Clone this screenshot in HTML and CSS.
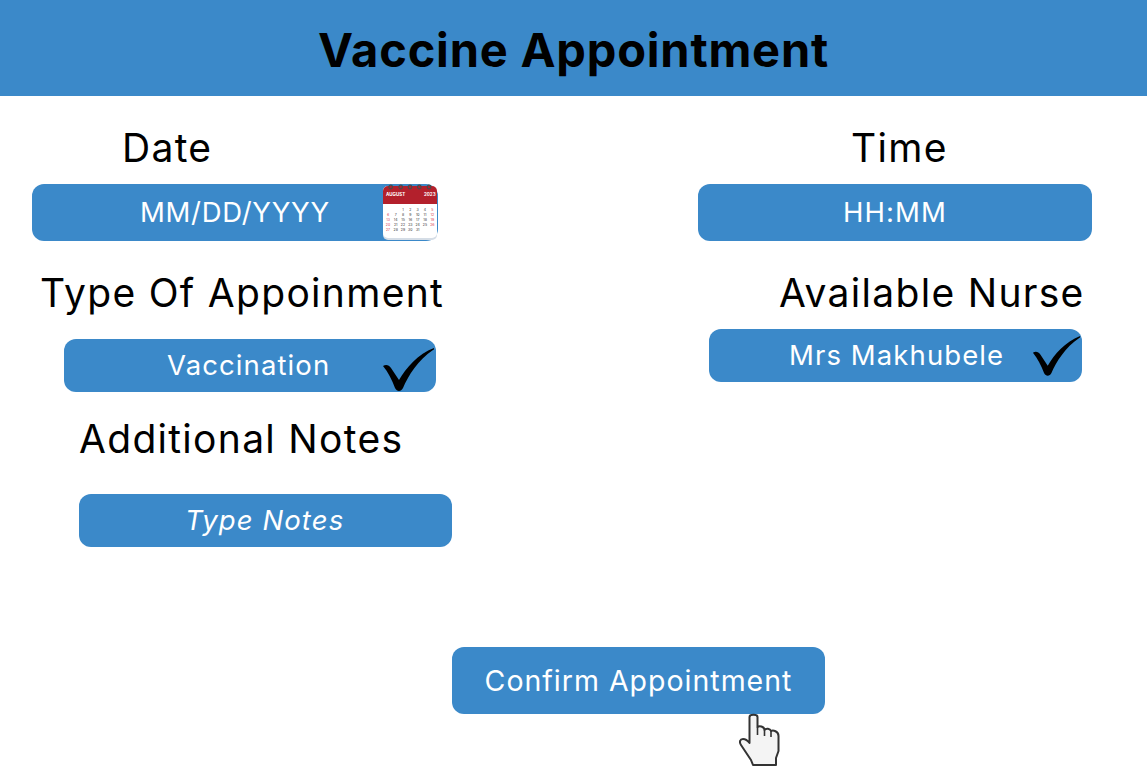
FILE: index.html
```html
<!DOCTYPE html>
<html lang="en">
<head>
  <meta charset="utf-8">
  <title>Vaccine Appointment</title>
  <link rel="stylesheet" href="styles.css">
</head>
<body>
  <header class="top-bar">
    <h1 class="title">Vaccine Appointment</h1>
  </header>

  <main class="form-area">
    <section class="left-col">
      <div class="label label-date">Date</div>
      <div class="field field-date">
        <span class="field-text date-text">MM/DD/YYYY</span>
        <svg class="calendar" viewBox="0 0 56 56" width="56" height="56">
          <rect x="1" y="2" width="54" height="54" rx="5" fill="#d5dde6"/>
          <rect x="1" y="2" width="54" height="52" rx="5" fill="#ffffff"/>
          <path d="M1 20V7a5 5 0 0 1 5-5h44a5 5 0 0 1 5 5v13z" fill="#b3202c"/>
          <g fill="none" stroke="#4a4a4a" stroke-width="1.200">
            <circle cx="8.700" cy="3" r="1.800"/>
            <circle cx="18.700" cy="3" r="1.800"/>
            <circle cx="28" cy="3" r="1.800"/>
            <circle cx="37.300" cy="3" r="1.800"/>
            <circle cx="47" cy="3" r="1.800"/>
          </g>
          <g class="cal-head">
            <text x="4" y="12">AUGUST</text>
            <text x="42" y="12">2023</text>
          </g>
          <g class="cal-days">
            <text x="21" y="26.500">1</text><text x="28.300" y="26.500">2</text><text x="35.700" y="26.500">3</text><text x="43" y="26.500">4</text><text class="cal-red" x="50.300" y="26.500">5</text>
            <text class="cal-red" x="6" y="31.500">6</text><text x="13.700" y="31.500">7</text><text x="21" y="31.500">8</text><text x="28.300" y="31.500">9</text><text x="35.700" y="31.500">10</text><text x="43" y="31.500">11</text><text class="cal-red" x="50.300" y="31.500">12</text>
            <text class="cal-red" x="6" y="36.500">13</text><text x="13.700" y="36.500">14</text><text x="21" y="36.500">15</text><text x="28.300" y="36.500">16</text><text x="35.700" y="36.500">17</text><text x="43" y="36.500">18</text><text class="cal-red" x="50.300" y="36.500">19</text>
            <text class="cal-red" x="6" y="42">20</text><text x="13.700" y="42">21</text><text x="21" y="42">22</text><text x="28.300" y="42">23</text><text x="35.700" y="42">24</text><text x="43" y="42">25</text><text class="cal-red" x="50.300" y="42">26</text>
            <text class="cal-red" x="6" y="47">27</text><text x="13.700" y="47">28</text><text x="21" y="47">29</text><text x="28.300" y="47">30</text><text x="35.700" y="47">31</text>
          </g>
        </svg>
      </div>

      <div class="label label-type">Type Of Appoinment</div>
      <div class="field field-small field-type">
        <span class="field-text">Vaccination</span>
        <svg class="tick" viewBox="0 0 54 46" width="54" height="46">
          <path d="M1 20C4 18 7 19 9 22L17 34C24 22 36 8 52 2C52 3 52 4 51 4C36 14 26 30 21 42C19 46 15 46 13 42C10 34 6 26 1 20z" fill="#000"/>
        </svg>
      </div>

      <div class="label label-notes">Additional Notes</div>
      <div class="field field-small field-notes">
        <span class="field-text notes-text">Type Notes</span>
      </div>
    </section>

    <section class="right-col">
      <div class="label label-time">Time</div>
      <div class="field field-time">
        <span class="field-text">HH:MM</span>
      </div>

      <div class="label label-nurse">Available Nurse</div>
      <div class="field field-small field-nurse">
        <span class="field-text">Mrs Makhubele</span>
        <svg class="tick" viewBox="0 0 54 46" width="50" height="43">
          <path d="M1 20C4 18 7 19 9 22L17 34C24 22 36 8 52 2C52 3 52 4 51 4C36 14 26 30 21 42C19 46 15 46 13 42C10 34 6 26 1 20z" fill="#000"/>
        </svg>
      </div>
    </section>
  </main>

  <div class="confirm-row">
    <div class="confirm-btn">Confirm Appointment</div>
    <svg class="pointer" viewBox="0 0 41 53" width="41" height="53">
      <path d="M10.500 27V4C10.500 1 18.500 1 18.500 4V14C20 12.500 25 13 25.500 17C27 15 31 15.500 32 18C34 17 39.500 18 39.500 23V38L37 45V52H14L12 47L2 32C0 29 1 26 4 26C6 26 9 28 10.500 30z" fill="#f4f4f4" stroke="#333" stroke-width="2" stroke-linejoin="round"/>
      <path d="M18.500 14V22M25.500 17V23M32 18V24" fill="none" stroke="#333" stroke-width="1.600"/>
    </svg>
  </div>
</body>
</html>
```

FILE: styles.css
```css
* {
  box-sizing: border-box;
}
body {
  margin: 0;
  background: #ffffff;
  color: #000000;
  font-family: Inter, sans-serif;
}
.top-bar {
  height: 96px;
  background: #3b89c9;
  display: flex;
  align-items: center;
  justify-content: center;
}
.title {
  margin: 0;
  font-size: 47px;
  font-weight: 700;
  letter-spacing: 0.8px;
  line-height: 56px;
  padding-top: 4px;
}
.form-area {
  display: grid;
  grid-template-columns: 573px 1fr;
  padding-top: 28px;
}
.label {
  font-size: 39px;
  letter-spacing: 1.3px;
  line-height: 48px;
  white-space: nowrap;
}
.field {
  height: 57px;
  padding-bottom: 2px;
  background: #3b89c9;
  border-radius: 12px;
  color: #ffffff;
  font-size: 27.500px;
  letter-spacing: 1.100px;
  display: flex;
  align-items: center;
  position: relative;
}
.field-small {
  height: 53px;
}
.field-text {
  white-space: nowrap;
}
.date-text {
  letter-spacing: 0.700px;
}
.label-date {
  margin-left: 122px;
  margin-bottom: 12px;
}
.field-date {
  margin-left: 32px;
  width: 406px;
  padding-left: 108px;
}
.calendar {
  position: absolute;
  top: 0;
  right: 0;
  letter-spacing: 0;
}
.cal-head {
  fill: #ffffff;
  font-size: 4.500px;
  font-weight: 700;
}
.cal-days {
  fill: #333333;
  font-size: 3.500px;
  text-anchor: middle;
}
.cal-red {
  fill: #d8364a;
}
.label-type {
  margin: 28px 0 22px 40px;
}
.field-type {
  margin-left: 64px;
  width: 372px;
  padding-left: 103px;
}
.tick {
  position: absolute;
  right: 0;
  top: 7px;
}
.label-notes {
  margin: 23px 0 31px 79px;
}
.field-notes {
  margin-left: 79px;
  width: 373px;
  padding-left: 106px;
}
.notes-text {
  font-style: italic;
}
.label-time {
  margin-left: 278px;
  margin-bottom: 12px;
}
.field-time {
  margin-left: 125px;
  width: 394px;
  justify-content: center;
}
.label-nurse {
  margin: 28px 0 12px 206px;
}
.field-nurse {
  margin-left: 136px;
  width: 373px;
  padding-left: 80px;
}
.field-nurse .tick {
  top: 5px;
}
.confirm-row {
  padding: 100px 0 0 452px;
}
.confirm-btn {
  width: 373px;
  height: 67px;
  background: #3b89c9;
  border-radius: 12px;
  color: #ffffff;
  font-size: 28.500px;
  letter-spacing: 1px;
  display: flex;
  align-items: center;
  justify-content: center;
}
.pointer {
  display: block;
  margin: -1px 0 0 287px;
}
```
